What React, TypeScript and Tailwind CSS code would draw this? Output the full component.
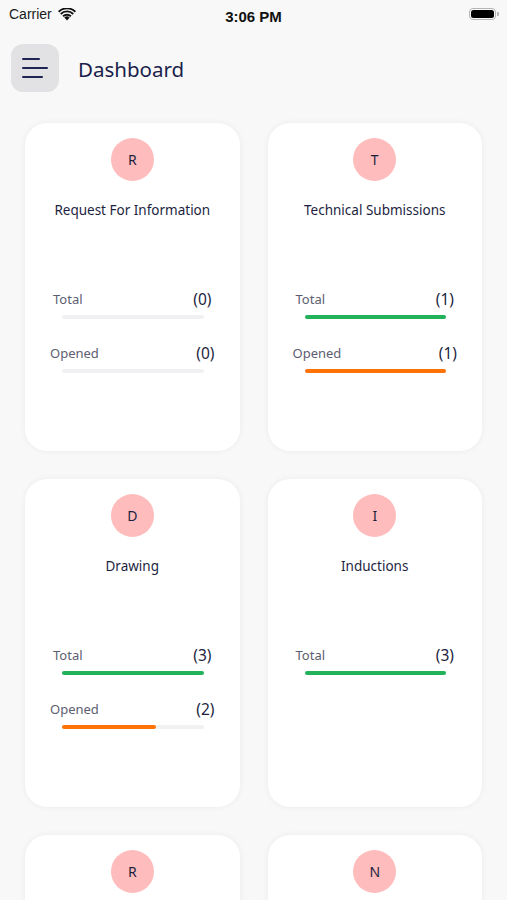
import React from "react";

type Stat = { label: string; value: number; pct: number; color: string; inset: "a" | "b" };
type Card = { letter: string; title: string; stats: Stat[] };

const GREEN = "bg-[#22b35a]";
const ORANGE = "bg-[#ff7306]";

const cards: Card[] = [
  {
    letter: "R",
    title: "Request For Information",
    stats: [
      { label: "Total", value: 0, pct: 0, color: GREEN, inset: "a" },
      { label: "Opened", value: 0, pct: 0, color: ORANGE, inset: "b" },
    ],
  },
  {
    letter: "T",
    title: "Technical Submissions",
    stats: [
      { label: "Total", value: 1, pct: 100, color: GREEN, inset: "a" },
      { label: "Opened", value: 1, pct: 100, color: ORANGE, inset: "b" },
    ],
  },
  {
    letter: "D",
    title: "Drawing",
    stats: [
      { label: "Total", value: 3, pct: 100, color: GREEN, inset: "a" },
      { label: "Opened", value: 2, pct: 66.7, color: ORANGE, inset: "b" },
    ],
  },
  {
    letter: "I",
    title: "Inductions",
    stats: [{ label: "Total", value: 3, pct: 100, color: GREEN, inset: "a" }],
  },
  { letter: "R", title: "", stats: [] },
  { letter: "N", title: "", stats: [] },
];

function StatRow({ s }: { s: Stat }) {
  return (
    <div>
      <div
        className={
          "flex h-[20px] items-center justify-between " +
          (s.inset === "a" ? "px-[28px]" : "px-[25px]")
        }
      >
        <span className="text-[13px] text-[#5c5e70]">{s.label}</span>
        <span className="text-[15.5px] text-[#1d1f3f]">({s.value})</span>
      </div>
      <div className="ml-[37px] mr-[36px] mt-[5px] h-[4px] rounded-full bg-[#f1f1f3]">
        <div className={"h-full rounded-full " + s.color} style={{ width: `${s.pct}%` }} />
      </div>
    </div>
  );
}

function DashCard({ c }: { c: Card }) {
  return (
    <div className="h-[328px] rounded-[22px] bg-white pt-[15px] shadow-[0_0_6px_rgba(0,0,0,0.06)]">
      <div className="mx-auto flex h-[43px] w-[43px] items-center justify-center rounded-full bg-[#ffbcbc] text-[14px] text-[#1d1f3f]">
        {c.letter}
      </div>
      <div className="mt-[19px] h-[20px] text-center text-[13.5px] leading-[20px] text-[#1d1f3f]">
        {c.title}
      </div>
      {c.stats.length > 0 && (
        <div className="mt-[70px] flex flex-col gap-[25px]">
          {c.stats.map((s, i) => (
            <StatRow key={i} s={s} />
          ))}
        </div>
      )}
    </div>
  );
}

export default function App() {
  return (
    <div
      className="h-[900px] w-[507px] overflow-hidden bg-[#f8f8f8]"
      style={{ fontFamily: '"Noto Sans", "Open Sans", sans-serif' }}
    >
      {/* status bar */}
      <div className="relative flex h-[28px] items-center pl-[9px] pr-[8px]">
        <div className="flex items-center gap-[6px]">
          <span
            className="text-[14px] text-[#1a1a1a]"
            style={{ fontFamily: '"Liberation Sans", Arial, sans-serif' }}
          >
            Carrier
          </span>
          <svg width="18" height="13" viewBox="0 0 18 13">
            <path d="M9 12.5 L6.3 9.6 A3.9 3.9 0 0 1 11.7 9.6 Z" fill="#111" />
            <path d="M4.4 7.6 A6.6 6.6 0 0 1 13.6 7.6 L12.3 9 A4.7 4.7 0 0 0 5.7 9 Z" fill="#111" />
            <path d="M2.1 5.3 A9.8 9.8 0 0 1 15.9 5.3 L14.6 6.7 A7.9 7.9 0 0 0 3.4 6.7 Z" fill="#111" />
            <path d="M0 3.1 A12.8 12.8 0 0 1 18 3.1 L16.7 4.5 A10.9 10.9 0 0 0 1.3 4.5 Z" fill="#111" />
          </svg>
        </div>
        <span
          className="absolute left-1/2 top-[6px] -translate-x-1/2 text-[15px] font-semibold text-[#111]"
          style={{ fontFamily: '"Liberation Sans", Arial, sans-serif' }}
        >
          3:06 PM
        </span>
        <div className="ml-auto flex items-center">
          <div className="flex h-[12px] w-[27px] items-center rounded-[4px] border border-[#b5b5b5] p-[1px]">
            <div className="h-full w-full rounded-[2.5px] bg-[#000]" />
          </div>
          <div className="ml-[1px] h-[4px] w-[2px] rounded-r-[1px] bg-[#b5b5b5]" />
        </div>
      </div>

      {/* header */}
      <div className="flex items-center px-[11px] pt-[16px]">
        <button className="flex h-[48px] w-[48px] flex-col justify-center gap-[7px] rounded-[12px] bg-[#e2e2e4] pl-[11px]">
          <span className="block h-[2px] w-[18px] rounded-full bg-[#1e2552]" />
          <span className="block h-[2px] w-[26px] rounded-full bg-[#1e2552]" />
          <span className="block h-[2px] w-[21px] rounded-full bg-[#1e2552]" />
        </button>
        <h1 className="ml-[19px] mt-[3px] text-[20.5px] text-[#1b1f4b]">Dashboard</h1>
      </div>

      {/* cards */}
      <div className="mt-[31px] grid grid-cols-2 gap-[28px] px-[25px]">
        {cards.map((c, i) => (
          <DashCard key={i} c={c} />
        ))}
      </div>
    </div>
  );
}
